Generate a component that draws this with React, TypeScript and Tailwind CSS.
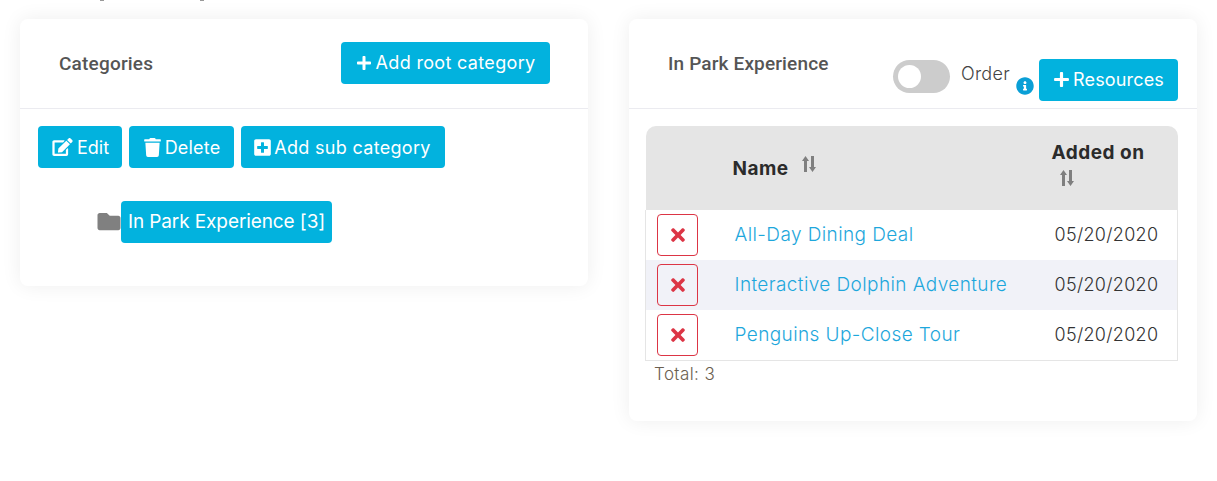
import { FaPlus, FaEdit, FaTrash, FaPlusSquare, FaFolder, FaTimes, FaInfoCircle } from "react-icons/fa";

const FONT = "font-['Inter','Noto_Sans',sans-serif]";

function SortIcon() {
  return (
    <svg width="16" height="18" viewBox="0 0 16 18" className="text-[#7f7f7f]" fill="currentColor">
      <path d="M4.5 1 8 6H6v11H3V6H1z" />
      <path d="M11.5 17 8 12h2V1h3v11h2z" />
    </svg>
  );
}

function Button({ icon, label, className }: { icon: React.ReactNode; label: string; className: string }) {
  return (
    <button className={`flex h-[42px] items-center justify-center rounded-[4px] bg-[#02b2de] text-white ${className}`}>
      {icon}
      {label}
    </button>
  );
}

const rows = [
  { name: "All-Day Dining Deal", date: "05/20/2020", striped: false },
  { name: "Interactive Dolphin Adventure", date: "05/20/2020", striped: true },
  { name: "Penguins Up-Close Tour", date: "05/20/2020", striped: false },
];

export default function App() {
  return (
    <div className={`${FONT} h-[481px] w-[1217px] overflow-hidden bg-white pl-5`}>
      {/* descenders of a line cut off by the top edge */}
      <div className="flex h-px">
        <span className="ml-[80px] h-px w-[4px] bg-[#999]" />
        <span className="ml-[96px] h-px w-[4px] bg-[#999]" />
      </div>
      <div className="flex items-start gap-[41px] pt-[18px]">
        {/* Categories */}
        <section className="h-[267px] w-[568px] rounded-lg bg-white shadow-[0_0_20px_rgba(0,0,0,0.07)]">
          <header className="flex h-[90px] items-center justify-between border-b border-[#ebebf0] pl-[39px] pr-[38px]">
            <h2 className="pt-[2px] font-['Roboto',sans-serif] text-[19px] font-medium tracking-[0.2px] text-[#555]">Categories</h2>
            <Button
              icon={<FaPlus className="mr-[4px] h-4 w-4" />}
              label="Add root category"
              className="mb-[2px] w-[209px] text-[18px] tracking-[0.33px]"
            />
          </header>
          <div className="flex gap-[7px] pl-[18px] pt-[17px] text-[18px] tracking-[0.3px]">
            <Button icon={<FaEdit className="mr-[4px] h-[18px] w-[21px]" />} label="Edit" className="w-[84px] pl-px tracking-[0px]" />
            <Button icon={<FaTrash className="mr-[3px] h-[19px] w-auto" />} label="Delete" className="w-[105px] tracking-[0.2px]" />
            <Button icon={<FaPlusSquare className="mr-[2px] h-[19px] w-auto" />} label="Add sub category" className="w-[204px] pr-[2px]" />
          </div>
          <div className="flex items-center pl-[77px] pt-[33px]">
            <FaFolder className="mb-[2px] h-[23px] w-[24px] text-[#808080]" />
            <Button icon={null} label="In Park Experience [3]" className="w-[211px] text-[19px] tracking-[-0.1px]" />
          </div>
        </section>

        {/* Resources */}
        <section className="h-[402px] w-[568px] rounded-lg bg-white shadow-[0_0_20px_rgba(0,0,0,0.07)]">
          <header className="flex h-[90px] border-b border-[#ebebf0] pl-[39px] pr-[19px]">
            <h2 className="pt-[31px] font-['Roboto',sans-serif] text-[19px] font-medium tracking-[0.15px] text-[#555]">In Park Experience</h2>
            <div className="ml-auto flex items-start">
              <div className="mt-[41px] flex h-[33px] w-[57px] items-center rounded-full bg-[#ccc] pl-[5px]">
                <span className="h-[23px] w-[23px] rounded-full bg-white" />
              </div>
              <span className="ml-[11px] mt-[41px] text-[18px] font-light tracking-[0.3px] text-[#444]">Order</span>
              <FaInfoCircle className="ml-[6px] mt-[58px] h-[18px] w-[18px] text-[#0a9fd6]" />
              <Button
                icon={<FaPlus className="mr-[3px] h-[17px] w-[17px]" />}
                label="Resources"
                className="ml-[5px] mt-[40px] w-[139px] pb-px text-[18px] tracking-[0.15px]"
              />
            </div>
          </header>

          <div className="pl-[16px] pt-[17px]">
            <table className="w-[533px] table-fixed border-collapse">
              <thead>
                <tr className="h-[84px] bg-[#e5e5e5] text-[19px] font-semibold tracking-[0.5px] text-[#2b2b2b]">
                  <th className="w-[76px] rounded-tl-[10px]" />
                  <th className="w-[320px] pl-[11px] text-left align-top">
                    <span className="flex items-center gap-[12px] pt-[29px]">
                      Name
                      <span className="-mt-[10px]"><SortIcon /></span>
                    </span>
                  </th>
                  <th className="rounded-tr-[10px] pl-[10px] text-left align-top">
                    <div className="pt-[15px] leading-[24px]">Added on</div>
                    <div className="pl-[7px] pt-[4px]"><SortIcon /></div>
                  </th>
                </tr>
              </thead>
              <tbody className="border-x border-b border-[#e5e5e5] text-[18px] font-light">
                {rows.map((row) => (
                  <tr key={row.name} className={`h-[50px] ${row.striped ? "bg-[#f1f2f8]" : "bg-white"}`}>
                    <td className="pl-[11px]">
                      <button className="flex h-[42px] w-[41px] items-center justify-center rounded-[4px] border border-[#dc3545] text-[#dc3545]">
                        <FaTimes className="h-[20px] w-auto" />
                      </button>
                    </td>
                    <td className="pl-[13px] text-[19px] tracking-[0.4px] text-[#1ea7dc]">{row.name}</td>
                    <td className="pb-px pl-[13px] tracking-[0.3px] text-[#333]">{row.date}</td>
                  </tr>
                ))}
              </tbody>
            </table>
            <p className="pl-[9px] pt-[1px] text-[17px] font-light tracking-[0.4px] text-[#6b5f50]">Total: 3</p>
          </div>
        </section>
      </div>
    </div>
  );
}
